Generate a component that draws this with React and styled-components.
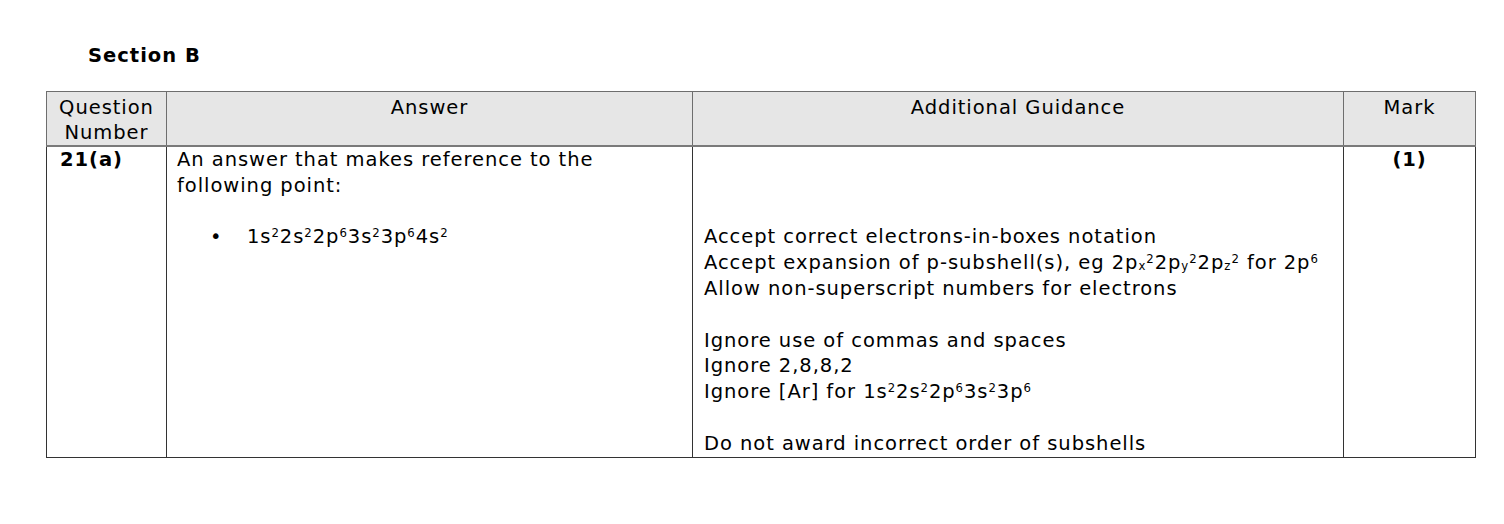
import React from "react";
import styled, { createGlobalStyle } from "styled-components";

const Global = createGlobalStyle`
  html, body { margin: 0; padding: 0; background: #fff; }
  body { font-family: "DejaVu Sans", Verdana, sans-serif; color: #000; }
`;

const Page = styled.div`
  width: 1504px;
  height: 524px;
  box-sizing: border-box;
  padding: 43px 0 0 46px;
`;

const Heading = styled.h2`
  margin: 0 0 22px 42px;
  font-size: 19.5px;
  letter-spacing: 1px;
  line-height: 26px;
  font-weight: bold;
`;

const Table = styled.table`
  border-collapse: collapse;
  table-layout: fixed;
  width: 1429px;
  font-size: 19.5px;
  letter-spacing: 0.95px;
  line-height: 25.8px;
`;

const Col = styled.col`
  width: ${(p) => p.$w}px;
`;

const Th = styled.th`
  background: #e6e6e6;
  font-weight: normal;
  vertical-align: top;
  text-align: center;
  padding: 3px 2px 0;
  line-height: 25px;
  border: 1px solid #6e6e6e;
  border-bottom: 2px solid #7a7a7a;
`;

const Td = styled.td`
  vertical-align: top;
  text-align: ${(p) => p.$align || "left"};
  padding: ${(p) => p.$pad || "0 10px"};
  font-weight: ${(p) => (p.$bold ? "bold" : "normal")};
  border: 1px solid #333;
`;

const Para = styled.div`
  min-height: 25.8px;
`;

const Bullet = styled.div`
  display: flex;
  margin-left: 33px;
  &::before {
    content: "•";
    width: 37px;
    flex: none;
  }
`;

const Sup = styled.sup`
  font-size: 0.6em;
  line-height: 0;
  vertical-align: 0.55em;
`;

const Sub = styled.sub`
  font-size: 0.6em;
  line-height: 0;
  vertical-align: -0.05em;
`;

const Config = ({ parts }) =>
  parts.map(([n, e], i) => (
    <React.Fragment key={i}>
      {n}
      <Sup>{e}</Sup>
    </React.Fragment>
  ));

export default function App() {
  return (
    <Page>
      <Global />
      <Heading>Section B</Heading>
      <Table>
        <colgroup>
          <Col $w={120} />
          <Col $w={526} />
          <Col $w={651} />
          <Col $w={132} />
        </colgroup>
        <thead>
          <tr>
            <Th>Question Number</Th>
            <Th>Answer</Th>
            <Th>Additional Guidance</Th>
            <Th>Mark</Th>
          </tr>
        </thead>
        <tbody>
          <tr>
            <Td $bold $pad="0 13px">21(a)</Td>
            <Td>
              <Para>An answer that makes reference to the following point:</Para>
              <Para />
              <Bullet>
                <span>
                  <Config
                    parts={[
                      ["1s", "2"],
                      ["2s", "2"],
                      ["2p", "6"],
                      ["3s", "2"],
                      ["3p", "6"],
                      ["4s", "2"],
                    ]}
                  />
                </span>
              </Bullet>
            </Td>
            <Td $pad="0 11px">
              <Para />
              <Para />
              <Para />
              <Para>Accept correct electrons-in-boxes notation</Para>
              <Para>
                Accept expansion of p-subshell(s), eg 2p<Sub>x</Sub>
                <Sup>2</Sup>2p<Sub>y</Sub>
                <Sup>2</Sup>2p<Sub>z</Sub>
                <Sup>2</Sup> for 2p<Sup>6</Sup>
              </Para>
              <Para>Allow non-superscript numbers for electrons</Para>
              <Para />
              <Para>Ignore use of commas and spaces</Para>
              <Para>Ignore 2,8,8,2</Para>
              <Para>
                Ignore [Ar] for{" "}
                <Config
                  parts={[
                    ["1s", "2"],
                    ["2s", "2"],
                    ["2p", "6"],
                    ["3s", "2"],
                    ["3p", "6"],
                  ]}
                />
              </Para>
              <Para />
              <Para>Do not award incorrect order of subshells</Para>
            </Td>
            <Td $align="center" $bold>(1)</Td>
          </tr>
        </tbody>
      </Table>
    </Page>
  );
}
